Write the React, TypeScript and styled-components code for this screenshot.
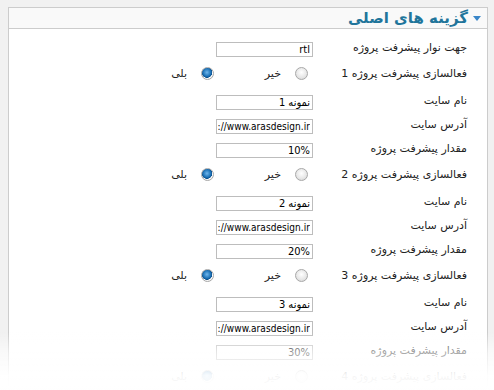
import React from "react";
import styled, { createGlobalStyle } from "styled-components";

const Global = createGlobalStyle`
  html, body { margin: 0; padding: 0; background: #f1f1f1; }
  body { font-family: "DejaVu Sans", "Noto Sans", sans-serif; }
`;

const Page = styled.div`
  height: 390px;
  overflow: hidden;
  padding: 7px 6px 0 8px;
  box-sizing: border-box;
  position: relative;
`;

const Panel = styled.div`
  direction: rtl;
  background: #fff;
  border: 1px solid #cccccc;
`;

const Header = styled.div`
  height: 20px;
  display: flex;
  align-items: center;
  gap: 5px;
  padding-right: 6px;
  background: #f9f9f9;
  border-bottom: 1px solid #cccccc;
`;

const Title = styled.h3`
  margin: 0;
  font-size: 15px;
  font-weight: bold;
  color: #21759b;
  line-height: 20px;
`;

const Body = styled.div`
  padding: 6px 20px 40px 0;
`;

const Row = styled.div<{ $tall?: boolean }>`
  display: grid;
  grid-template-columns: 150px 1fr;
  column-gap: 4px;
  align-items: center;
  height: ${(p) => (p.$tall ? 29 : 24)}px;
`;

const Label = styled.div`
  font-size: 11px;
  color: #222;
  white-space: nowrap;
`;

const Input = styled.input<{ $compact?: boolean }>`
  box-sizing: border-box;
  width: 97px;
  height: 15px;
  margin: 0;
  padding: 0 2px 0 1px;
  border: 1px solid #bdbdbd;
  direction: rtl;
  text-align: right;
  font-family: "DejaVu Sans Condensed", "DejaVu Sans", sans-serif;
  font-size: ${(p) => (p.$compact ? 10 : 11)}px;
  letter-spacing: ${(p) => (p.$compact ? "0.05px" : "0")};
  color: #000;
  background: #fff;
  outline: none;
`;

const Options = styled.div`
  display: flex;
  align-items: center;
  padding-right: 5px;
`;

const Option = styled.label`
  display: inline-flex;
  align-items: center;
  gap: 14px;
  width: 94px;
  font-size: 11px;
  color: #222;
`;

const Radio = styled.input.attrs({ type: "radio" })`
  appearance: none;
  -webkit-appearance: none;
  margin: 0;
  width: 13px;
  height: 13px;
  border-radius: 50%;
  border: 1px solid #a8a8a8;
  box-sizing: border-box;
  background: radial-gradient(circle at 50% 40%, #ffffff 0%, #e6e6e6 60%, #cfcfcf 100%);
  flex: none;
  &:checked {
    background: radial-gradient(circle at 45% 40%, #6fb6ec 0%, #1a6fb4 45%, #0d4f8a 58%, #ffffff 62%, #e4e4e4 85%, #cfcfcf 100%);
  }
`;

const Fade = styled.div`
  position: fixed;
  left: 0;
  right: 0;
  bottom: 0;
  height: 58px;
  background: linear-gradient(to bottom, rgba(255, 255, 255, 0) 0%, rgba(255, 255, 255, 0.6) 35%, rgba(255, 255, 255, 0.95) 75%, #fff 100%);
  pointer-events: none;
`;

const Arrow = () => (
  <svg width="8" height="5" viewBox="0 0 8 5">
    <path d="M0 0 H8 L4 5 Z" fill="#3a86c8" />
  </svg>
);

const projects = [
  { n: 1, name: "نمونه 1", pct: "10%" },
  { n: 2, name: "نمونه 2", pct: "20%" },
  { n: 3, name: "نمونه 3", pct: "30%" },
];

const Toggle = ({ n }: { n: number }) => (
  <Row $tall>
    <Label>فعالسازی پیشرفت پروژه {n}</Label>
    <Options>
      <Option>
        <Radio name={`p${n}`} />
        خیر
      </Option>
      <Option>
        <Radio name={`p${n}`} defaultChecked />
        بلی
      </Option>
    </Options>
  </Row>
);

export default function App() {
  return (
    <>
      <Global />
      <Page>
        <Panel>
          <Header>
            <Arrow />
            <Title>گزینه های اصلی</Title>
          </Header>
          <Body>
            <Row>
              <Label>جهت نوار پیشرفت پروژه</Label>
              <div>
                <Input defaultValue="rtl" />
              </div>
            </Row>
            {projects.map((p) => (
              <React.Fragment key={p.n}>
                <Toggle n={p.n} />
                <Row>
                  <Label>نام سایت</Label>
                  <div>
                    <Input defaultValue={p.name} />
                  </div>
                </Row>
                <Row>
                  <Label>آدرس سایت</Label>
                  <div>
                    <Input $compact defaultValue="http://www.arasdesign.ir" />
                  </div>
                </Row>
                <Row>
                  <Label>مقدار پیشرفت پروژه</Label>
                  <div>
                    <Input defaultValue={p.pct} />
                  </div>
                </Row>
              </React.Fragment>
            ))}
            <Toggle n={4} />
          </Body>
        </Panel>
        <Fade />
      </Page>
    </>
  );
}
